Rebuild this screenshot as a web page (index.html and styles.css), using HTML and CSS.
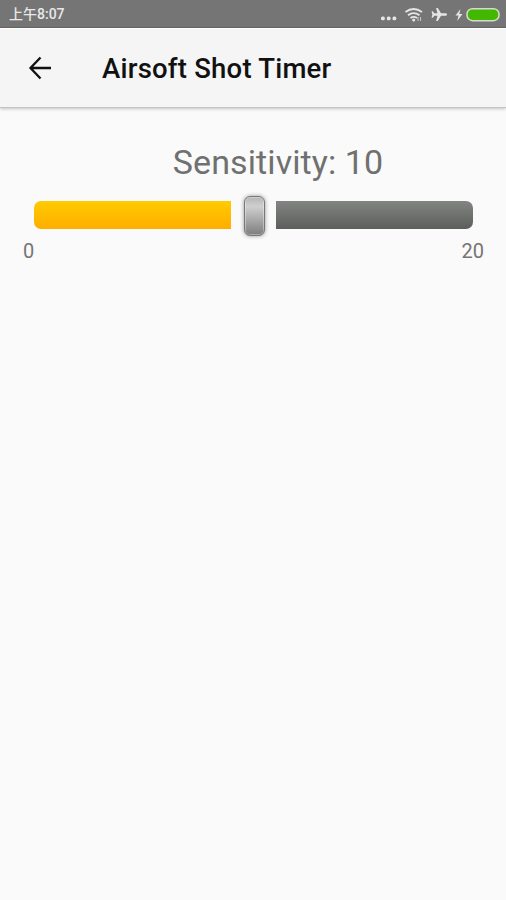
FILE: index.html
```html
<!DOCTYPE html>
<html lang="en">
<head>
  <meta charset="UTF-8" />
  <meta name="viewport" content="width=device-width, initial-scale=1.0"/>
  <title>Airsoft Shot Timer</title>
  <link rel="stylesheet" href="styles.css">
</head>
<body>
  <div class="status-bar">
    <span class="time">上午8:07</span>
    <svg class="status-icons" width="126" height="28" viewBox="0 0 126 28">
      <g fill="#e6e6e6">
        <rect x="1" y="16.500" width="3.800" height="3.800" rx="1.500"/>
        <rect x="6.800" y="16.500" width="3.800" height="3.800" rx="1.500"/>
        <rect x="12.500" y="16.500" width="3.800" height="3.800" rx="1.500"/>
        <path d="M67 14.500q0 1.200-1.400 1.200H61l-3.200 5.300h-1.700l1.400-5.300h-3.200l-1.500 2h-1.300l.9-3.200-.9-3.200h1.300l1.500 2h3.200L56.100 8h1.700l3.200 5.300h4.600q1.400 0 1.400 1.200z"/>
        <path d="M80.500 9l-5 6.500h3l-1.300 5.500 5.300-7h-3.200z"/>
      </g>
      <g fill="none" stroke="#e6e6e6" stroke-width="1.900">
        <path d="M25.500 12q8-6 16.500 0"/>
        <path d="M28 15.200q5.500-4.200 11.500 0"/>
        <path d="M30.500 18q3.200-2.300 6.500 0"/>
      </g>
      <circle cx="33.700" cy="20" r="1.500" fill="#e6e6e6"/>
      <path d="M38 17v4M40.500 17v4" stroke="#bdbdbd" stroke-width="1.200"/>
      <rect x="87" y="8.700" width="32" height="12" rx="5.500" fill="#42b900" stroke="#d5dccf" stroke-width="1.500"/>
    </svg>
  </div>

  <div class="app-bar">
    <button class="back" aria-label="Back">
      <svg width="24" height="24" viewBox="0 0 24 24" fill="none" stroke="#111" stroke-width="2.300">
        <path d="M12.500 1.500L2.500 12l10 10.500M2.500 12H23"/>
      </svg>
    </button>
    <h1>Airsoft Shot Timer</h1>
  </div>

  <div class="content">
    <p class="label">Sensitivity: 10</p>
    <div class="slider">
      <div class="track filled"></div>
      <div class="thumb"></div>
      <div class="track empty"></div>
    </div>
    <div class="range">
      <span>0</span>
      <span>20</span>
    </div>
  </div>
</body>
</html>
```

FILE: styles.css
```css
* {
  margin: 0; padding: 0;
  box-sizing: border-box;
  font-family: Roboto, 'Noto Sans CJK SC', sans-serif;
}
body {
  background-color: #fafafa;
  min-height: 100vh;
}

.status-bar {
  display: flex;
  justify-content: space-between;
  align-items: center;
  height: 28px;
  padding-left: 9px;
  background-color: #757575;
  border-bottom: 1px solid #686868;
}
.time {
  font-size: 14px;
  line-height: 28px;
  font-weight: 500;
  color: #e8e8e8;
}

.app-bar {
  display: flex;
  align-items: center;
  height: 80px;
  padding-left: 28px;
  background-color: #f5f5f5;
  border-top: 1px solid #fff;
  border-bottom: 1px solid #c4c4c4;
  box-shadow: 0 1px 3px rgba(0,0,0,0.22);
}
.back {
  display: flex;
  width: 74px;
  border: none;
  background: none;
  cursor: pointer;
}
.app-bar h1 {
  padding-top: 2px;
  font-size: 27.5px;
  font-weight: 500;
  line-height: 40px;
  letter-spacing: 0.22px;
  color: #111;
}

.content {
  padding: 34px 22px 0;
}
.label {
  padding-left: 50px;
  font-size: 34px;
  line-height: 40px;
  letter-spacing: 0.1px;
  text-align: center;
  color: #707070;
}

.slider {
  display: flex;
  align-items: center;
  justify-content: space-between;
  height: 42px;
  margin: 12px 11px 0 12px;
}
.track {
  width: 197px;
  height: 28px;
}
.filled {
  border-radius: 7px 0 0 7px;
  background: linear-gradient(#ffcb00, #ffad00);
}
.empty {
  border-radius: 0 7px 7px 0;
  background: linear-gradient(#838583, #5c5e5c);
}
.thumb {
  width: 21px;
  height: 40px;
  margin: 2px 0 0 2px;
  border: 1.5px solid #777;
  border-radius: 6px;
  background: linear-gradient(#b5b5b5, #cfcfcf 25%, #7d7d7d);
  box-shadow: inset 0 0 0 1px rgba(255,255,255,0.35), 0 0 4px rgba(0,0,0,0.4);
}

.range {
  display: flex;
  justify-content: space-between;
  margin-top: 3px;
  padding-left: 1px;
  font-size: 20px;
  line-height: 24px;
  color: #757575;
}
```
